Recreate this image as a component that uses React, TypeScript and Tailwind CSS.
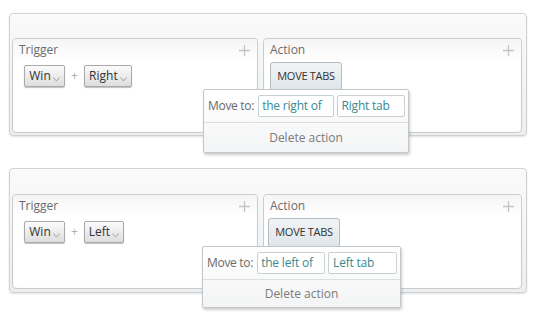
import React from 'react';

interface RuleProps {
  keyName: string;
  keyWidth: string;
  direction: string;
  target: string;
  popupClass: string;
  dirWidth: string;
  targetWidth: string;
  actionClass: string;
  sectionClass: string;
}

const Chevron = () => (
  <svg width="7" height="5" viewBox="0 0 7 5" className="mt-[7px] ml-[2px]">
    <path d="M0.5 0.5 L3.5 4 L6.5 0.5" fill="none" stroke="#9a9a9a" strokeWidth="0.9" />
  </svg>
);

const Plus = () => (
  <svg width="11" height="11" viewBox="0 0 11 11">
    <path d="M5.5 0 V11 M0 5.5 H11" stroke="#c4c4c4" strokeWidth="1.3" />
  </svg>
);

const KeyButton = ({ label, width }: { label: string; width: string }) => (
  <div
    className={`flex items-center justify-center h-[22px] ${width} rounded-[2px] border border-[#a9a9a9] bg-gradient-to-b from-[#fbfbfb] to-[#dedede] shadow-[0_1px_1px_rgba(0,0,0,0.25)] text-[12px] text-[#333]`}
  >
    <span>{label}</span>
    <Chevron />
  </div>
);

const Rule = ({
  keyName,
  keyWidth,
  direction,
  target,
  popupClass,
  dirWidth,
  targetWidth,
  actionClass,
  sectionClass,
}: RuleProps) => {
  return (
    <div
      className={`relative ml-[9px] w-[518px] rounded-[4px] border border-[#cfd1d3] bg-gradient-to-b from-[#fafafa] to-[#eceeef] shadow-[0_1px_2px_rgba(0,0,0,0.12)] ${sectionClass}`}
    >
      <div className="flex gap-[5px] pl-[2px] pr-[4px] h-[95px]">
        {/* Trigger panel */}
        <div className="w-[246px] h-full rounded-[4px] border border-[#cacdd0] bg-white flex flex-col shadow-[inset_0_0_2px_rgba(0,0,0,0.06)]">
          <div className="flex items-center justify-between h-[22px] pl-[6px] pr-[7px] bg-gradient-to-b from-[#f5f5f5] to-white rounded-t-[4px]">
            <span className="text-[12px] text-[#6b6b6b]">Trigger</span>
            <Plus />
          </div>
          <div className="flex items-center gap-[5px] pl-[11px] mt-[4px]">
            <KeyButton label="Win" width="w-[41px]" />
            <span className="text-[12px] text-[#b0b0b0] mx-[1px]">+</span>
            <KeyButton label={keyName} width={keyWidth} />
          </div>
        </div>

        {/* Action panel */}
        <div className="w-[259px] h-full rounded-[4px] border border-[#cacdd0] bg-white flex flex-col shadow-[inset_0_0_2px_rgba(0,0,0,0.06)]">
          <div className="flex items-center justify-between h-[22px] pl-[6px] pr-[7px] bg-gradient-to-b from-[#f5f5f5] to-white rounded-t-[4px]">
            <span className="text-[12px] text-[#6b6b6b]">Action</span>
            <Plus />
          </div>
          <div className={actionClass}>
            <div className="flex items-center justify-center w-[72px] h-[32px] pb-[4px] rounded-[3px] border border-[#b4bcc1] bg-gradient-to-b from-[#f1f4f6] to-[#dde4e8] text-[11px] text-[#333] tracking-[-0.3px]">
              MOVE TABS
            </div>
          </div>
        </div>
      </div>

      {/* Action popup */}
      <div
        className={`absolute rounded-[2px] border border-[#c4c7ca] bg-gradient-to-b from-white to-[#f3f4f5] shadow-[1px_2px_3px_rgba(0,0,0,0.2)] flex flex-col ${popupClass}`}
      >
        <div className="flex items-center h-[33px] pl-[4px] pr-[3px] gap-[3px] border-b border-[#dcdfe1] whitespace-nowrap">
          <span className="text-[12px] text-[#6a6a6a] tracking-[-0.3px] mr-[1px]">Move to:</span>
          <div
            className={`h-[22px] ${dirWidth} rounded-[2px] border border-[#c9d0d2] bg-white flex items-center pl-[3px] text-[12px] text-[#3a8a90] tracking-[-0.2px]`}
          >
            {direction}
          </div>
          <div
            className={`h-[22px] ${targetWidth} rounded-[2px] border border-[#c9d0d2] bg-white flex items-center pl-[4px] text-[12px] text-[#3a8a90] tracking-[-0.2px]`}
          >
            {target}
          </div>
        </div>
        <div className="flex-1 flex items-center justify-center text-[12px] text-[#7a7a7a]">
          Delete action
        </div>
      </div>
    </div>
  );
};

const App = () => {
  return (
    <div
      className="w-[540px] h-[327px] bg-white overflow-hidden pt-[13px]"
      style={{ fontFamily: '"Open Sans", "Noto Sans", sans-serif' }}
    >
      <Rule
        keyName="Right"
        keyWidth="w-[48px]"
        direction="the right of"
        target="Right tab"
        popupClass="left-[193px] top-[75px] w-[206px] h-[64px]"
        dirWidth="w-[76px]"
        targetWidth="w-[69px]"
        actionClass="pl-[6px] mt-[1px]"
        sectionClass="h-[123px] pt-[24px]"
      />
      <div className="h-[32px]" />
      <Rule
        keyName="Left"
        keyWidth="w-[40px]"
        direction="the left of"
        target="Left tab"
        popupClass="left-[192px] top-[77px] w-[199px] h-[62px]"
        dirWidth="w-[68px]"
        targetWidth="w-[69px]"
        actionClass="pl-[4px] mt-[1px]"
        sectionClass="h-[125px] pt-[25px]"
      />
    </div>
  );
};

export default App;
